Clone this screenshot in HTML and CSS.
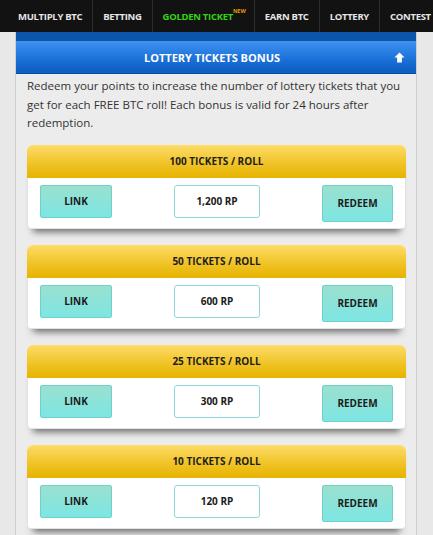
FILE: index.html
```html
<!DOCTYPE html>
<html lang="en">
<head>
<meta charset="UTF-8" />
<meta name="viewport" content="width=device-width, initial-scale=1" />
<title>Lottery Tickets Bonus</title>
<link rel="stylesheet" href="styles.css">
</head>
<body>
  <nav class="topnav">
    <a href="#">MULTIPLY BTC</a>
    <a href="#">BETTING</a>
    <a href="#" class="golden">GOLDEN TICKET<sup>NEW</sup></a>
    <a href="#">EARN BTC</a>
    <a href="#">LOTTERY</a>
    <a href="#">CONTEST</a>
  </nav>

  <div class="page">
    <div class="panel">
      <div class="panel-top"></div>
      <div class="panel-head">
        <span>LOTTERY TICKETS BONUS</span>
        <svg class="arrow" viewBox="0 0 12 12" width="11" height="11">
          <path d="M6 0.5 L11.5 6 L8.6 6 L8.6 11.5 L3.4 11.5 L3.4 6 L0.5 6 Z" fill="#fff"/>
        </svg>
      </div>
      <div class="panel-body">
        <p class="intro">Redeem your points to increase the number of lottery tickets that you get for each FREE BTC roll! Each bonus is valid for 24 hours after redemption.</p>

        <div class="bonus">
          <div class="bonus-head">100 TICKETS / ROLL</div>
          <div class="bonus-row">
            <button class="btn">LINK</button>
            <div class="cost">1,200 RP</div>
            <button class="btn redeem">REDEEM</button>
          </div>
        </div>

        <div class="bonus">
          <div class="bonus-head">50 TICKETS / ROLL</div>
          <div class="bonus-row">
            <button class="btn">LINK</button>
            <div class="cost">600 RP</div>
            <button class="btn redeem">REDEEM</button>
          </div>
        </div>

        <div class="bonus">
          <div class="bonus-head">25 TICKETS / ROLL</div>
          <div class="bonus-row">
            <button class="btn">LINK</button>
            <div class="cost">300 RP</div>
            <button class="btn redeem">REDEEM</button>
          </div>
        </div>

        <div class="bonus">
          <div class="bonus-head">10 TICKETS / ROLL</div>
          <div class="bonus-row">
            <button class="btn">LINK</button>
            <div class="cost">120 RP</div>
            <button class="btn redeem">REDEEM</button>
          </div>
        </div>
      </div>
    </div>
  </div>
</body>
</html>
```

FILE: styles.css
```css
body {
    margin: 0;
    font-family: "Open Sans", Arial, sans-serif;
    background-color: #e8e8e8;
    color: #333;
    overflow: hidden;
}
.topnav {
    display: flex;
    height: 32px;
    background-color: #121212;
    padding-left: 8px;
    white-space: nowrap;
    overflow: hidden;
}
.topnav a {
    display: flex;
    align-items: center;
    flex-shrink: 0;
    padding: 0 10px;
    border-right: 1px solid #2e2e2e;
    color: #e6e6e6;
    text-decoration: none;
    font-size: 9.5px;
    font-weight: 700;
    letter-spacing: -0.3px;
}
.topnav a.golden {
    color: #33d412;
    padding-right: 8px;
}
.topnav sup {
    align-self: flex-start;
    margin-top: 7px;
    font-size: 5.5px;
    letter-spacing: 0;
    color: #e89c00;
}
.page {
    padding-left: 15px;
}
.panel {
    width: 400px;
    border-left: 1px solid #cfcfcf;
    border-right: 1px solid #cfcfcf;
    background-color: #ececec;
    min-height: 510px;
}
.panel-top {
    height: 9px;
    background-color: #0b56aa;
}
.panel-head {
    height: 32px;
    display: flex;
    align-items: center;
    justify-content: center;
    position: relative;
    background: linear-gradient(#3e92f2, #1a6fd6 60%, #0d5cbf);
    border-bottom: 1px solid #0a4c9c;
    color: #fff;
    font-size: 11px;
    font-weight: 700;
    padding-right: 8px;
}
.arrow {
    position: absolute;
    right: 11px;
    top: 11px;
}
.panel-body {
    padding: 3px 10px 0 11px;
}
.intro {
    margin: 0 0 12px;
    font-size: 11.5px;
    line-height: 18.5px;
}
.bonus {
    background-color: #fff;
    border-radius: 6px;
    margin-bottom: 16px;
    box-shadow: 0 9px 7px -6px rgba(0, 0, 0, 0.55);
}
.bonus-head {
    height: 33px;
    display: flex;
    align-items: center;
    justify-content: center;
    background: linear-gradient(#fddc68, #f0c428 55%, #e6b300);
    border-radius: 6px 6px 0 0;
    color: #1d1d1d;
    font-size: 10px;
    font-weight: 700;
}
.bonus-row {
    display: flex;
    justify-content: space-between;
    align-items: flex-start;
    padding: 7px 12px 6px;
    border: 1px solid #e2e2e2;
    border-top: none;
    border-radius: 0 0 3px 3px;
}
.btn {
    width: 72px;
    height: 33px;
    border: 1px solid #6fd0cc;
    border-radius: 2px;
    background: linear-gradient(#9ae0cf, #7de6e3);
    font-family: "Open Sans", Arial, sans-serif;
    font-size: 10px;
    font-weight: 700;
    color: #1b1b1b;
    padding: 0;
}
.btn.redeem {
    width: 71px;
    height: 37px;
}
.cost {
    width: 84px;
    height: 31px;
    display: flex;
    align-items: center;
    justify-content: center;
    border: 1px solid #8dd6da;
    border-radius: 3px;
    background-color: #fff;
    font-size: 10px;
    font-weight: 700;
    color: #1b1b1b;
}
```
